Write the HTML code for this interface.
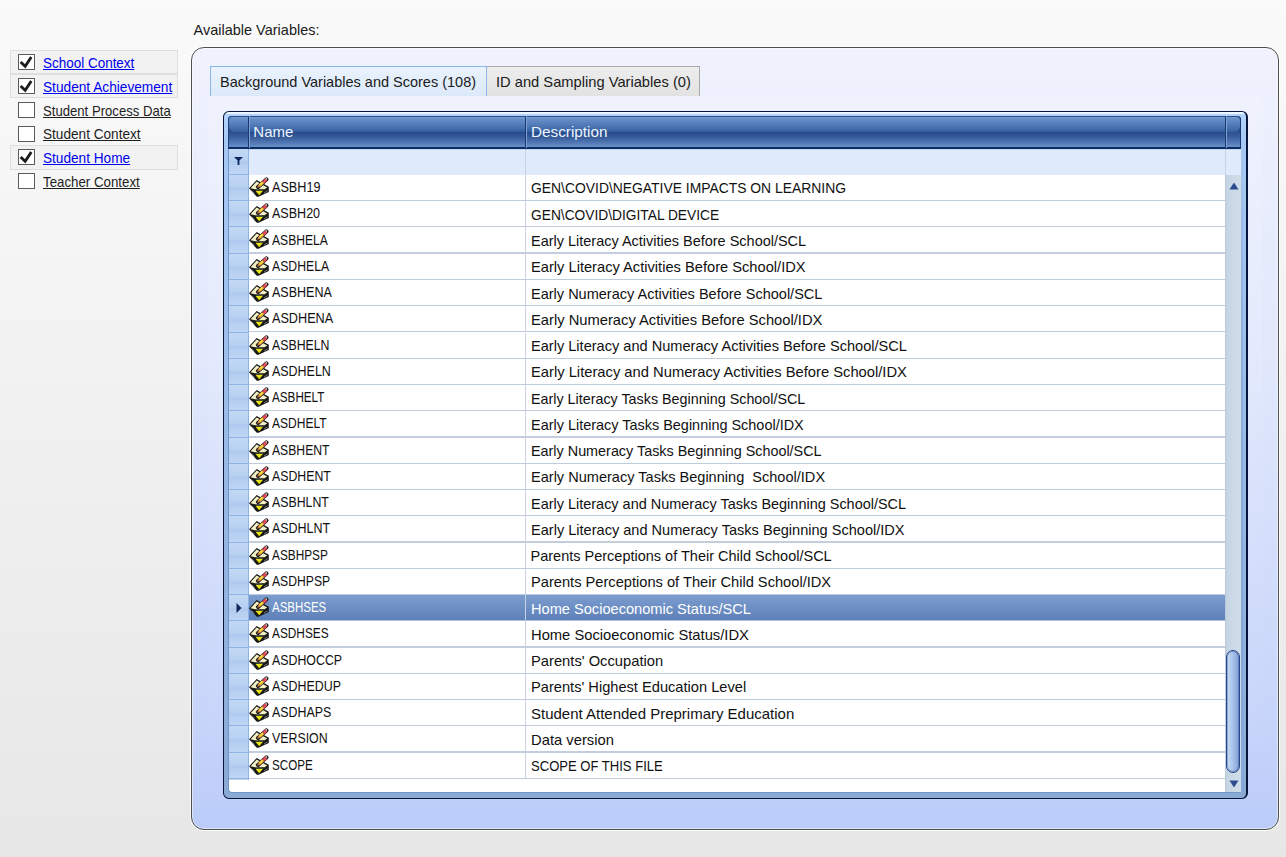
<!DOCTYPE html>
<html><head><meta charset="utf-8"><style>
*{margin:0;padding:0;box-sizing:border-box}
html,body{width:1286px;height:857px;overflow:hidden}
body{position:relative;font-family:"Liberation Sans",sans-serif;background:linear-gradient(#fafafa 0px,#e7e7e7 857px);}
.a{position:absolute;white-space:pre}
.t{position:absolute;white-space:pre;line-height:20px}
.cb{position:absolute;left:18px;width:17px;height:16px;border:1px solid #5a5a5a;background:#fff}
.grp{position:absolute;left:10px;width:168px;background:#f2f2f2;border:1px solid #dedede}
.lbl{position:absolute;left:42.7px;font-size:14.5px;line-height:20px;text-decoration:underline;white-space:pre}
.lbl.on{color:#0000ee}
.lbl.off{color:#1e1e1e}
.panel{position:absolute;left:191px;top:47px;width:1088px;height:783px;border:1px solid #4e4e4e;border-radius:13px;background:linear-gradient(#f0f2fd 0%,#e1e8fc 40%,#c8d5fa 85%,#bbccf9 100%);box-shadow:inset 0 0 0 1px rgba(255,255,255,.5),0 0 0 1px rgba(255,255,255,.8)}
.tab{position:absolute;top:66px;height:30px;font-size:14.5px;color:#1a1a1a}
.grid{position:absolute;left:223px;top:111px;width:1025px;height:688px;border:1px solid #06153a;border-right-width:2px;border-radius:6px;background:linear-gradient(#f4faff 0px,#e8f4ff 1.5px,#b2d4fc 2.5px,#a6c8f2 30px,#9cbce8 300px,#8aaad4 100%);}
.hdr{position:absolute;left:228px;top:116px;width:1013px;height:33px;border-radius:4px 4px 0 0;box-shadow:inset -1px 0 0 #173a74,inset 1px 0 0 #1e4280;background:linear-gradient(#6a8cc0 0px,#88a8d8 1px,#6b93cc 2px,#4670ae 12px,#35609f 15.5px,#264a8a 16px,#3a5f9c 22px,#5c84c0 29px,#6b91c9 31px,#0c2c64 31px,#0c2c64 33px)}
.hsep{position:absolute;top:116px;height:32px;width:2px;background:linear-gradient(90deg,#173a74 0 1px,#7f9fd0 1px 2px)}
.htx{position:absolute;top:121.5px;font-size:15px;line-height:20px;color:#eef4ff;white-space:pre}
.frow{position:absolute;left:228px;top:149px;width:1013px;height:25.5px;background:#dfeafa;border-top:1px solid #c4d6f0}
.ind{position:absolute;left:228px;width:21px;border-left:1px solid #6f96d0;border-right:1px solid #8fb3e6;background:linear-gradient(#c2d8f4 0%,#b9d2f2 40%,#adc9ef 52%,#b6cff1 62%,#c0d6f4 100%)}
.row{position:absolute;left:249px;width:976px;background:#fff;border-bottom:1px solid #bfcbdc}
.row.sel{background:linear-gradient(#7b9dcf,#5e80b8);border-bottom-color:#aebfdc}
.cell{position:absolute;font-size:14.5px;line-height:20px;white-space:pre;color:#111}
.sel .cell{color:#fff}
.vsep{position:absolute;left:276px;top:0;bottom:0;width:1px;background:#c8d2e2}
.ic{position:absolute;left:-1px;top:0px}
</style></head><body>

<div class="t" style="left:193.5px;top:19.6px;font-size:14.5px;color:#1a1a1a">Available Variables:</div>
<div class="grp" style="top:50.00px;height:24.35px"></div>
<div class="grp" style="top:73.85px;height:24.35px"></div>
<div class="grp" style="top:145.40px;height:24.35px"></div>
<div class="cb" style="top:54.00px"><svg width="15" height="15" viewBox="0 0 15 15" style="position:absolute;left:0;top:0"><path d="M1.6 6.9 L6.2 11.3 L12.3 1.9" fill="none" stroke="#1c1c1c" stroke-width="2.8" stroke-linecap="butt" stroke-linejoin="miter"/></svg></div>
<div class="lbl on" style="top:53.08px;transform:scaleX(0.9288);transform-origin:0 0;">School Context</div>
<div class="cb" style="top:77.85px"><svg width="15" height="15" viewBox="0 0 15 15" style="position:absolute;left:0;top:0"><path d="M1.6 6.9 L6.2 11.3 L12.3 1.9" fill="none" stroke="#1c1c1c" stroke-width="2.8" stroke-linecap="butt" stroke-linejoin="miter"/></svg></div>
<div class="lbl on" style="top:76.88px;transform:scaleX(0.9432);transform-origin:0 0;">Student Achievement</div>
<div class="cb" style="top:101.70px"></div>
<div class="lbl off" style="top:100.68px;transform:scaleX(0.9052);transform-origin:0 0;">Student Process Data</div>
<div class="cb" style="top:125.55px"></div>
<div class="lbl off" style="top:124.48px;transform:scaleX(0.9386);transform-origin:0 0;">Student Context</div>
<div class="cb" style="top:149.40px"><svg width="15" height="15" viewBox="0 0 15 15" style="position:absolute;left:0;top:0"><path d="M1.6 6.9 L6.2 11.3 L12.3 1.9" fill="none" stroke="#1c1c1c" stroke-width="2.8" stroke-linecap="butt" stroke-linejoin="miter"/></svg></div>
<div class="lbl on" style="top:148.28px;transform:scaleX(0.9394);transform-origin:0 0;">Student Home</div>
<div class="cb" style="top:173.25px"></div>
<div class="lbl off" style="top:172.08px;transform:scaleX(0.9164);transform-origin:0 0;">Teacher Context</div>
<div class="panel"></div>
<div style="position:absolute;left:207px;top:96px;width:1055px;height:717px;background:linear-gradient(rgba(255,255,255,0.14),rgba(255,255,255,0.05) 50%,rgba(255,255,255,0.0))"></div>
<div class="tab" style="left:210px;width:277px;border:1px solid #8db6ea;border-bottom:none;background:linear-gradient(#eaf3fd,#dce9f9)"><div class="t" style="left:9px;top:5.4px">Background Variables and Scores (108)</div></div>
<div class="tab" style="left:487px;width:213px;border:1px solid #a9a9a9;border-left:none;border-bottom:none;background:linear-gradient(#ededed,#e2e2e2)"><div class="t" style="left:8.5px;top:5.4px;transform:scaleX(1.013);transform-origin:0 0">ID and Sampling Variables (0)</div></div>
<div class="grid"></div>
<div style="position:absolute;left:228px;top:140px;width:1013px;height:652.5px;background:#fff;border-left:1px solid #6f96cc;border-bottom:1px solid #6f96cc;border-bottom-left-radius:4px;border-bottom-right-radius:2px"></div>
<div class="hdr"></div>
<div style="position:absolute;left:229px;top:117px;width:19px;height:30px;background:linear-gradient(#2a4c8b 0px,#2a4c8b 14px,#3a5f9c 20px,#5c84c0 28px,#6b91c9 30px)"></div>
<div style="position:absolute;left:229px;top:117px;width:19px;height:15px;border-bottom-left-radius:6px;background:linear-gradient(#7a9ed2 0px,#6b93cc 1px,#4670ae 11px,#36609f 15px)"></div>
<div style="position:absolute;left:1226px;top:117px;width:14px;height:30px;background:linear-gradient(#2a4c8b 0px,#2a4c8b 14px,#3a5f9c 20px,#5c84c0 28px,#6b91c9 30px)"></div>
<div style="position:absolute;left:1226px;top:117px;width:14px;height:15px;border-bottom-right-radius:6px;border-top-right-radius:3px;background:linear-gradient(#7a9ed2 0px,#6b93cc 1px,#4670ae 11px,#36609f 15px)"></div>
<div style="position:absolute;left:228px;top:116px;width:1013px;height:10px;border-top:1px solid #294c88;border-left:1px solid #1e4280;border-right:1px solid #173a74;border-radius:4px 4px 0 0"></div>
<div class="hsep" style="left:247.5px"></div>
<div class="hsep" style="left:524.5px"></div>
<div class="hsep" style="left:1224.5px"></div>
<div class="htx" style="left:253.3px">Name</div>
<div class="htx" style="left:530.5px;transform:scaleX(1.02);transform-origin:0 0">Description</div>
<div class="frow"></div>
<div class="ind" style="top:149px;height:26px;border-bottom:1px solid #8fb3e6"><svg width="12" height="12" viewBox="0 0 12 12" style="position:absolute;left:4px;top:6px"><path d="M1 2 L10 2 L6.4 5.6 L6.4 10 L4.6 10 L4.6 5.6 Z" fill="#0b2562"/></svg></div>
<div style="position:absolute;left:525px;top:149px;width:1px;height:25.5px;background:#c8d2e2"></div>
<div style="position:absolute;left:1225px;top:149px;width:1px;height:25.5px;background:#c8d2e2"></div>
<div class="ind" style="top:174.94px;height:27.26px"></div>
<div class="row" style="top:174.94px;height:26.26px;"><svg class="ic" width="24" height="24" viewBox="0 0 24 24"><path d="M1 13.3 L8.6 5.1 L20.8 11.8 L20.8 17 L10.5 21.8 L8.8 21.8 Z" fill="#171717"/><path d="M2.5 13.3 L8.6 6.5 L19.3 12.4 L16.8 14 L8.4 14.5 Z" fill="#f4f0c4"/><path d="M7.6 14.5 L17.3 13.9 L16.7 15.3 L8.4 15.8 Z" fill="#4a4a4a"/><path d="M7.6 16 L15 15.7 L11.2 20.3 Z" fill="#e8e410"/><path d="M3.6 15.6 L6.6 18.4" stroke="#8a8a8a" stroke-width="0.8"/><path d="M16 18.2 L19.4 15.8" stroke="#9a9a9a" stroke-width="0.8"/><g transform="translate(9.4,12.5) rotate(-42)"><rect x="-1.2" y="-2.05" width="15.3" height="4.1" rx="1.7" fill="#1c1c1c"/><path d="M-0.5 0 L2.6 -1.4 L2.6 1.4 Z" fill="#e0804e"/><rect x="2.4" y="-1.5" width="5.8" height="3" rx="1" fill="#ee9c48"/><rect x="2.9" y="-1.1" width="4.6" height="1.7" rx="0.85" fill="#f4e230"/><rect x="8.2" y="-1.5" width="3.6" height="3" fill="#e84a5a"/><rect x="11.6" y="-1.2" width="1.4" height="1.6" fill="#eed8d8"/></g></svg><div class="cell" style="left:22.5px;top:2.06px;transform:scaleX(0.8713);transform-origin:0 0;">ASBH19</div><div class="vsep"></div><div class="cell" style="left:281.5px;top:3.56px;transform:scaleX(0.9574);transform-origin:0 0;">GEN\COVID\NEGATIVE IMPACTS ON LEARNING</div></div>
<div class="ind" style="top:201.20px;height:27.26px"></div>
<div class="row" style="top:201.20px;height:26.26px;"><svg class="ic" width="24" height="24" viewBox="0 0 24 24"><path d="M1 13.3 L8.6 5.1 L20.8 11.8 L20.8 17 L10.5 21.8 L8.8 21.8 Z" fill="#171717"/><path d="M2.5 13.3 L8.6 6.5 L19.3 12.4 L16.8 14 L8.4 14.5 Z" fill="#f4f0c4"/><path d="M7.6 14.5 L17.3 13.9 L16.7 15.3 L8.4 15.8 Z" fill="#4a4a4a"/><path d="M7.6 16 L15 15.7 L11.2 20.3 Z" fill="#e8e410"/><path d="M3.6 15.6 L6.6 18.4" stroke="#8a8a8a" stroke-width="0.8"/><path d="M16 18.2 L19.4 15.8" stroke="#9a9a9a" stroke-width="0.8"/><g transform="translate(9.4,12.5) rotate(-42)"><rect x="-1.2" y="-2.05" width="15.3" height="4.1" rx="1.7" fill="#1c1c1c"/><path d="M-0.5 0 L2.6 -1.4 L2.6 1.4 Z" fill="#e0804e"/><rect x="2.4" y="-1.5" width="5.8" height="3" rx="1" fill="#ee9c48"/><rect x="2.9" y="-1.1" width="4.6" height="1.7" rx="0.85" fill="#f4e230"/><rect x="8.2" y="-1.5" width="3.6" height="3" fill="#e84a5a"/><rect x="11.6" y="-1.2" width="1.4" height="1.6" fill="#eed8d8"/></g></svg><div class="cell" style="left:22.5px;top:2.06px;transform:scaleX(0.8644);transform-origin:0 0;">ASBH20</div><div class="vsep"></div><div class="cell" style="left:281.5px;top:3.56px;transform:scaleX(0.9493);transform-origin:0 0;">GEN\COVID\DIGITAL DEVICE</div></div>
<div class="ind" style="top:227.46px;height:27.26px"></div>
<div class="row" style="top:227.46px;height:26.26px;border-bottom-width:2px;border-bottom-color:#c3cddc;"><svg class="ic" width="24" height="24" viewBox="0 0 24 24"><path d="M1 13.3 L8.6 5.1 L20.8 11.8 L20.8 17 L10.5 21.8 L8.8 21.8 Z" fill="#171717"/><path d="M2.5 13.3 L8.6 6.5 L19.3 12.4 L16.8 14 L8.4 14.5 Z" fill="#f4f0c4"/><path d="M7.6 14.5 L17.3 13.9 L16.7 15.3 L8.4 15.8 Z" fill="#4a4a4a"/><path d="M7.6 16 L15 15.7 L11.2 20.3 Z" fill="#e8e410"/><path d="M3.6 15.6 L6.6 18.4" stroke="#8a8a8a" stroke-width="0.8"/><path d="M16 18.2 L19.4 15.8" stroke="#9a9a9a" stroke-width="0.8"/><g transform="translate(9.4,12.5) rotate(-42)"><rect x="-1.2" y="-2.05" width="15.3" height="4.1" rx="1.7" fill="#1c1c1c"/><path d="M-0.5 0 L2.6 -1.4 L2.6 1.4 Z" fill="#e0804e"/><rect x="2.4" y="-1.5" width="5.8" height="3" rx="1" fill="#ee9c48"/><rect x="2.9" y="-1.1" width="4.6" height="1.7" rx="0.85" fill="#f4e230"/><rect x="8.2" y="-1.5" width="3.6" height="3" fill="#e84a5a"/><rect x="11.6" y="-1.2" width="1.4" height="1.6" fill="#eed8d8"/></g></svg><div class="cell" style="left:22.5px;top:2.06px;transform:scaleX(0.8345);transform-origin:0 0;">ASBHELA</div><div class="vsep"></div><div class="cell" style="left:281.5px;top:3.56px;transform:scaleX(0.9982);transform-origin:0 0;">Early Literacy Activities Before School/SCL</div></div>
<div class="ind" style="top:253.72px;height:27.26px"></div>
<div class="row" style="top:253.72px;height:26.26px;"><svg class="ic" width="24" height="24" viewBox="0 0 24 24"><path d="M1 13.3 L8.6 5.1 L20.8 11.8 L20.8 17 L10.5 21.8 L8.8 21.8 Z" fill="#171717"/><path d="M2.5 13.3 L8.6 6.5 L19.3 12.4 L16.8 14 L8.4 14.5 Z" fill="#f4f0c4"/><path d="M7.6 14.5 L17.3 13.9 L16.7 15.3 L8.4 15.8 Z" fill="#4a4a4a"/><path d="M7.6 16 L15 15.7 L11.2 20.3 Z" fill="#e8e410"/><path d="M3.6 15.6 L6.6 18.4" stroke="#8a8a8a" stroke-width="0.8"/><path d="M16 18.2 L19.4 15.8" stroke="#9a9a9a" stroke-width="0.8"/><g transform="translate(9.4,12.5) rotate(-42)"><rect x="-1.2" y="-2.05" width="15.3" height="4.1" rx="1.7" fill="#1c1c1c"/><path d="M-0.5 0 L2.6 -1.4 L2.6 1.4 Z" fill="#e0804e"/><rect x="2.4" y="-1.5" width="5.8" height="3" rx="1" fill="#ee9c48"/><rect x="2.9" y="-1.1" width="4.6" height="1.7" rx="0.85" fill="#f4e230"/><rect x="8.2" y="-1.5" width="3.6" height="3" fill="#e84a5a"/><rect x="11.6" y="-1.2" width="1.4" height="1.6" fill="#eed8d8"/></g></svg><div class="cell" style="left:22.5px;top:2.06px;transform:scaleX(0.8442);transform-origin:0 0;">ASDHELA</div><div class="vsep"></div><div class="cell" style="left:281.5px;top:3.56px;transform:scaleX(1.0111);transform-origin:0 0;">Early Literacy Activities Before School/IDX</div></div>
<div class="ind" style="top:279.98px;height:27.26px"></div>
<div class="row" style="top:279.98px;height:26.26px;"><svg class="ic" width="24" height="24" viewBox="0 0 24 24"><path d="M1 13.3 L8.6 5.1 L20.8 11.8 L20.8 17 L10.5 21.8 L8.8 21.8 Z" fill="#171717"/><path d="M2.5 13.3 L8.6 6.5 L19.3 12.4 L16.8 14 L8.4 14.5 Z" fill="#f4f0c4"/><path d="M7.6 14.5 L17.3 13.9 L16.7 15.3 L8.4 15.8 Z" fill="#4a4a4a"/><path d="M7.6 16 L15 15.7 L11.2 20.3 Z" fill="#e8e410"/><path d="M3.6 15.6 L6.6 18.4" stroke="#8a8a8a" stroke-width="0.8"/><path d="M16 18.2 L19.4 15.8" stroke="#9a9a9a" stroke-width="0.8"/><g transform="translate(9.4,12.5) rotate(-42)"><rect x="-1.2" y="-2.05" width="15.3" height="4.1" rx="1.7" fill="#1c1c1c"/><path d="M-0.5 0 L2.6 -1.4 L2.6 1.4 Z" fill="#e0804e"/><rect x="2.4" y="-1.5" width="5.8" height="3" rx="1" fill="#ee9c48"/><rect x="2.9" y="-1.1" width="4.6" height="1.7" rx="0.85" fill="#f4e230"/><rect x="8.2" y="-1.5" width="3.6" height="3" fill="#e84a5a"/><rect x="11.6" y="-1.2" width="1.4" height="1.6" fill="#eed8d8"/></g></svg><div class="cell" style="left:22.5px;top:2.06px;transform:scaleX(0.8629);transform-origin:0 0;">ASBHENA</div><div class="vsep"></div><div class="cell" style="left:281.5px;top:3.56px;transform:scaleX(1.0017);transform-origin:0 0;">Early Numeracy Activities Before School/SCL</div></div>
<div class="ind" style="top:306.24px;height:27.26px"></div>
<div class="row" style="top:306.24px;height:26.26px;"><svg class="ic" width="24" height="24" viewBox="0 0 24 24"><path d="M1 13.3 L8.6 5.1 L20.8 11.8 L20.8 17 L10.5 21.8 L8.8 21.8 Z" fill="#171717"/><path d="M2.5 13.3 L8.6 6.5 L19.3 12.4 L16.8 14 L8.4 14.5 Z" fill="#f4f0c4"/><path d="M7.6 14.5 L17.3 13.9 L16.7 15.3 L8.4 15.8 Z" fill="#4a4a4a"/><path d="M7.6 16 L15 15.7 L11.2 20.3 Z" fill="#e8e410"/><path d="M3.6 15.6 L6.6 18.4" stroke="#8a8a8a" stroke-width="0.8"/><path d="M16 18.2 L19.4 15.8" stroke="#9a9a9a" stroke-width="0.8"/><g transform="translate(9.4,12.5) rotate(-42)"><rect x="-1.2" y="-2.05" width="15.3" height="4.1" rx="1.7" fill="#1c1c1c"/><path d="M-0.5 0 L2.6 -1.4 L2.6 1.4 Z" fill="#e0804e"/><rect x="2.4" y="-1.5" width="5.8" height="3" rx="1" fill="#ee9c48"/><rect x="2.9" y="-1.1" width="4.6" height="1.7" rx="0.85" fill="#f4e230"/><rect x="8.2" y="-1.5" width="3.6" height="3" fill="#e84a5a"/><rect x="11.6" y="-1.2" width="1.4" height="1.6" fill="#eed8d8"/></g></svg><div class="cell" style="left:22.5px;top:2.06px;transform:scaleX(0.8721);transform-origin:0 0;">ASDHENA</div><div class="vsep"></div><div class="cell" style="left:281.5px;top:3.56px;transform:scaleX(1.0157);transform-origin:0 0;">Early Numeracy Activities Before School/IDX</div></div>
<div class="ind" style="top:332.50px;height:27.26px"></div>
<div class="row" style="top:332.50px;height:26.26px;"><svg class="ic" width="24" height="24" viewBox="0 0 24 24"><path d="M1 13.3 L8.6 5.1 L20.8 11.8 L20.8 17 L10.5 21.8 L8.8 21.8 Z" fill="#171717"/><path d="M2.5 13.3 L8.6 6.5 L19.3 12.4 L16.8 14 L8.4 14.5 Z" fill="#f4f0c4"/><path d="M7.6 14.5 L17.3 13.9 L16.7 15.3 L8.4 15.8 Z" fill="#4a4a4a"/><path d="M7.6 16 L15 15.7 L11.2 20.3 Z" fill="#e8e410"/><path d="M3.6 15.6 L6.6 18.4" stroke="#8a8a8a" stroke-width="0.8"/><path d="M16 18.2 L19.4 15.8" stroke="#9a9a9a" stroke-width="0.8"/><g transform="translate(9.4,12.5) rotate(-42)"><rect x="-1.2" y="-2.05" width="15.3" height="4.1" rx="1.7" fill="#1c1c1c"/><path d="M-0.5 0 L2.6 -1.4 L2.6 1.4 Z" fill="#e0804e"/><rect x="2.4" y="-1.5" width="5.8" height="3" rx="1" fill="#ee9c48"/><rect x="2.9" y="-1.1" width="4.6" height="1.7" rx="0.85" fill="#f4e230"/><rect x="8.2" y="-1.5" width="3.6" height="3" fill="#e84a5a"/><rect x="11.6" y="-1.2" width="1.4" height="1.6" fill="#eed8d8"/></g></svg><div class="cell" style="left:22.5px;top:2.06px;transform:scaleX(0.8493);transform-origin:0 0;">ASBHELN</div><div class="vsep"></div><div class="cell" style="left:281.5px;top:3.56px;transform:scaleX(1.0054);transform-origin:0 0;">Early Literacy and Numeracy Activities Before School/SCL</div></div>
<div class="ind" style="top:358.76px;height:27.26px"></div>
<div class="row" style="top:358.76px;height:26.26px;"><svg class="ic" width="24" height="24" viewBox="0 0 24 24"><path d="M1 13.3 L8.6 5.1 L20.8 11.8 L20.8 17 L10.5 21.8 L8.8 21.8 Z" fill="#171717"/><path d="M2.5 13.3 L8.6 6.5 L19.3 12.4 L16.8 14 L8.4 14.5 Z" fill="#f4f0c4"/><path d="M7.6 14.5 L17.3 13.9 L16.7 15.3 L8.4 15.8 Z" fill="#4a4a4a"/><path d="M7.6 16 L15 15.7 L11.2 20.3 Z" fill="#e8e410"/><path d="M3.6 15.6 L6.6 18.4" stroke="#8a8a8a" stroke-width="0.8"/><path d="M16 18.2 L19.4 15.8" stroke="#9a9a9a" stroke-width="0.8"/><g transform="translate(9.4,12.5) rotate(-42)"><rect x="-1.2" y="-2.05" width="15.3" height="4.1" rx="1.7" fill="#1c1c1c"/><path d="M-0.5 0 L2.6 -1.4 L2.6 1.4 Z" fill="#e0804e"/><rect x="2.4" y="-1.5" width="5.8" height="3" rx="1" fill="#ee9c48"/><rect x="2.9" y="-1.1" width="4.6" height="1.7" rx="0.85" fill="#f4e230"/><rect x="8.2" y="-1.5" width="3.6" height="3" fill="#e84a5a"/><rect x="11.6" y="-1.2" width="1.4" height="1.6" fill="#eed8d8"/></g></svg><div class="cell" style="left:22.5px;top:2.06px;transform:scaleX(0.8589);transform-origin:0 0;">ASDHELN</div><div class="vsep"></div><div class="cell" style="left:281.5px;top:3.56px;transform:scaleX(1.0163);transform-origin:0 0;">Early Literacy and Numeracy Activities Before School/IDX</div></div>
<div class="ind" style="top:385.02px;height:27.26px"></div>
<div class="row" style="top:385.02px;height:26.26px;"><svg class="ic" width="24" height="24" viewBox="0 0 24 24"><path d="M1 13.3 L8.6 5.1 L20.8 11.8 L20.8 17 L10.5 21.8 L8.8 21.8 Z" fill="#171717"/><path d="M2.5 13.3 L8.6 6.5 L19.3 12.4 L16.8 14 L8.4 14.5 Z" fill="#f4f0c4"/><path d="M7.6 14.5 L17.3 13.9 L16.7 15.3 L8.4 15.8 Z" fill="#4a4a4a"/><path d="M7.6 16 L15 15.7 L11.2 20.3 Z" fill="#e8e410"/><path d="M3.6 15.6 L6.6 18.4" stroke="#8a8a8a" stroke-width="0.8"/><path d="M16 18.2 L19.4 15.8" stroke="#9a9a9a" stroke-width="0.8"/><g transform="translate(9.4,12.5) rotate(-42)"><rect x="-1.2" y="-2.05" width="15.3" height="4.1" rx="1.7" fill="#1c1c1c"/><path d="M-0.5 0 L2.6 -1.4 L2.6 1.4 Z" fill="#e0804e"/><rect x="2.4" y="-1.5" width="5.8" height="3" rx="1" fill="#ee9c48"/><rect x="2.9" y="-1.1" width="4.6" height="1.7" rx="0.85" fill="#f4e230"/><rect x="8.2" y="-1.5" width="3.6" height="3" fill="#e84a5a"/><rect x="11.6" y="-1.2" width="1.4" height="1.6" fill="#eed8d8"/></g></svg><div class="cell" style="left:22.5px;top:2.06px;transform:scaleX(0.8059);transform-origin:0 0;">ASBHELT</div><div class="vsep"></div><div class="cell" style="left:281.5px;top:3.56px;transform:scaleX(0.9874);transform-origin:0 0;">Early Literacy Tasks Beginning School/SCL</div></div>
<div class="ind" style="top:411.28px;height:27.26px"></div>
<div class="row" style="top:411.28px;height:26.26px;border-bottom-width:2px;border-bottom-color:#c3cddc;"><svg class="ic" width="24" height="24" viewBox="0 0 24 24"><path d="M1 13.3 L8.6 5.1 L20.8 11.8 L20.8 17 L10.5 21.8 L8.8 21.8 Z" fill="#171717"/><path d="M2.5 13.3 L8.6 6.5 L19.3 12.4 L16.8 14 L8.4 14.5 Z" fill="#f4f0c4"/><path d="M7.6 14.5 L17.3 13.9 L16.7 15.3 L8.4 15.8 Z" fill="#4a4a4a"/><path d="M7.6 16 L15 15.7 L11.2 20.3 Z" fill="#e8e410"/><path d="M3.6 15.6 L6.6 18.4" stroke="#8a8a8a" stroke-width="0.8"/><path d="M16 18.2 L19.4 15.8" stroke="#9a9a9a" stroke-width="0.8"/><g transform="translate(9.4,12.5) rotate(-42)"><rect x="-1.2" y="-2.05" width="15.3" height="4.1" rx="1.7" fill="#1c1c1c"/><path d="M-0.5 0 L2.6 -1.4 L2.6 1.4 Z" fill="#e0804e"/><rect x="2.4" y="-1.5" width="5.8" height="3" rx="1" fill="#ee9c48"/><rect x="2.9" y="-1.1" width="4.6" height="1.7" rx="0.85" fill="#f4e230"/><rect x="8.2" y="-1.5" width="3.6" height="3" fill="#e84a5a"/><rect x="11.6" y="-1.2" width="1.4" height="1.6" fill="#eed8d8"/></g></svg><div class="cell" style="left:22.5px;top:2.06px;transform:scaleX(0.8315);transform-origin:0 0;">ASDHELT</div><div class="vsep"></div><div class="cell" style="left:281.5px;top:3.56px;transform:scaleX(0.9963);transform-origin:0 0;">Early Literacy Tasks Beginning School/IDX</div></div>
<div class="ind" style="top:437.54px;height:27.26px"></div>
<div class="row" style="top:437.54px;height:26.26px;"><svg class="ic" width="24" height="24" viewBox="0 0 24 24"><path d="M1 13.3 L8.6 5.1 L20.8 11.8 L20.8 17 L10.5 21.8 L8.8 21.8 Z" fill="#171717"/><path d="M2.5 13.3 L8.6 6.5 L19.3 12.4 L16.8 14 L8.4 14.5 Z" fill="#f4f0c4"/><path d="M7.6 14.5 L17.3 13.9 L16.7 15.3 L8.4 15.8 Z" fill="#4a4a4a"/><path d="M7.6 16 L15 15.7 L11.2 20.3 Z" fill="#e8e410"/><path d="M3.6 15.6 L6.6 18.4" stroke="#8a8a8a" stroke-width="0.8"/><path d="M16 18.2 L19.4 15.8" stroke="#9a9a9a" stroke-width="0.8"/><g transform="translate(9.4,12.5) rotate(-42)"><rect x="-1.2" y="-2.05" width="15.3" height="4.1" rx="1.7" fill="#1c1c1c"/><path d="M-0.5 0 L2.6 -1.4 L2.6 1.4 Z" fill="#e0804e"/><rect x="2.4" y="-1.5" width="5.8" height="3" rx="1" fill="#ee9c48"/><rect x="2.9" y="-1.1" width="4.6" height="1.7" rx="0.85" fill="#f4e230"/><rect x="8.2" y="-1.5" width="3.6" height="3" fill="#e84a5a"/><rect x="11.6" y="-1.2" width="1.4" height="1.6" fill="#eed8d8"/></g></svg><div class="cell" style="left:22.5px;top:2.06px;transform:scaleX(0.8390);transform-origin:0 0;">ASBHENT</div><div class="vsep"></div><div class="cell" style="left:281.5px;top:3.56px;transform:scaleX(0.9914);transform-origin:0 0;">Early Numeracy Tasks Beginning School/SCL</div></div>
<div class="ind" style="top:463.80px;height:27.26px"></div>
<div class="row" style="top:463.80px;height:26.26px;"><svg class="ic" width="24" height="24" viewBox="0 0 24 24"><path d="M1 13.3 L8.6 5.1 L20.8 11.8 L20.8 17 L10.5 21.8 L8.8 21.8 Z" fill="#171717"/><path d="M2.5 13.3 L8.6 6.5 L19.3 12.4 L16.8 14 L8.4 14.5 Z" fill="#f4f0c4"/><path d="M7.6 14.5 L17.3 13.9 L16.7 15.3 L8.4 15.8 Z" fill="#4a4a4a"/><path d="M7.6 16 L15 15.7 L11.2 20.3 Z" fill="#e8e410"/><path d="M3.6 15.6 L6.6 18.4" stroke="#8a8a8a" stroke-width="0.8"/><path d="M16 18.2 L19.4 15.8" stroke="#9a9a9a" stroke-width="0.8"/><g transform="translate(9.4,12.5) rotate(-42)"><rect x="-1.2" y="-2.05" width="15.3" height="4.1" rx="1.7" fill="#1c1c1c"/><path d="M-0.5 0 L2.6 -1.4 L2.6 1.4 Z" fill="#e0804e"/><rect x="2.4" y="-1.5" width="5.8" height="3" rx="1" fill="#ee9c48"/><rect x="2.9" y="-1.1" width="4.6" height="1.7" rx="0.85" fill="#f4e230"/><rect x="8.2" y="-1.5" width="3.6" height="3" fill="#e84a5a"/><rect x="11.6" y="-1.2" width="1.4" height="1.6" fill="#eed8d8"/></g></svg><div class="cell" style="left:22.5px;top:2.06px;transform:scaleX(0.8486);transform-origin:0 0;">ASDHENT</div><div class="vsep"></div><div class="cell" style="left:281.5px;top:3.56px;transform:scaleX(1.0034);transform-origin:0 0;">Early Numeracy Tasks Beginning&nbsp; School/IDX</div></div>
<div class="ind" style="top:490.06px;height:27.26px"></div>
<div class="row" style="top:490.06px;height:26.26px;"><svg class="ic" width="24" height="24" viewBox="0 0 24 24"><path d="M1 13.3 L8.6 5.1 L20.8 11.8 L20.8 17 L10.5 21.8 L8.8 21.8 Z" fill="#171717"/><path d="M2.5 13.3 L8.6 6.5 L19.3 12.4 L16.8 14 L8.4 14.5 Z" fill="#f4f0c4"/><path d="M7.6 14.5 L17.3 13.9 L16.7 15.3 L8.4 15.8 Z" fill="#4a4a4a"/><path d="M7.6 16 L15 15.7 L11.2 20.3 Z" fill="#e8e410"/><path d="M3.6 15.6 L6.6 18.4" stroke="#8a8a8a" stroke-width="0.8"/><path d="M16 18.2 L19.4 15.8" stroke="#9a9a9a" stroke-width="0.8"/><g transform="translate(9.4,12.5) rotate(-42)"><rect x="-1.2" y="-2.05" width="15.3" height="4.1" rx="1.7" fill="#1c1c1c"/><path d="M-0.5 0 L2.6 -1.4 L2.6 1.4 Z" fill="#e0804e"/><rect x="2.4" y="-1.5" width="5.8" height="3" rx="1" fill="#ee9c48"/><rect x="2.9" y="-1.1" width="4.6" height="1.7" rx="0.85" fill="#f4e230"/><rect x="8.2" y="-1.5" width="3.6" height="3" fill="#e84a5a"/><rect x="11.6" y="-1.2" width="1.4" height="1.6" fill="#eed8d8"/></g></svg><div class="cell" style="left:22.5px;top:2.06px;transform:scaleX(0.8493);transform-origin:0 0;">ASBHLNT</div><div class="vsep"></div><div class="cell" style="left:281.5px;top:3.56px;transform:scaleX(0.9973);transform-origin:0 0;">Early Literacy and Numeracy Tasks Beginning School/SCL</div></div>
<div class="ind" style="top:516.32px;height:27.26px"></div>
<div class="row" style="top:516.32px;height:26.26px;border-bottom-width:2px;border-bottom-color:#c3cddc;"><svg class="ic" width="24" height="24" viewBox="0 0 24 24"><path d="M1 13.3 L8.6 5.1 L20.8 11.8 L20.8 17 L10.5 21.8 L8.8 21.8 Z" fill="#171717"/><path d="M2.5 13.3 L8.6 6.5 L19.3 12.4 L16.8 14 L8.4 14.5 Z" fill="#f4f0c4"/><path d="M7.6 14.5 L17.3 13.9 L16.7 15.3 L8.4 15.8 Z" fill="#4a4a4a"/><path d="M7.6 16 L15 15.7 L11.2 20.3 Z" fill="#e8e410"/><path d="M3.6 15.6 L6.6 18.4" stroke="#8a8a8a" stroke-width="0.8"/><path d="M16 18.2 L19.4 15.8" stroke="#9a9a9a" stroke-width="0.8"/><g transform="translate(9.4,12.5) rotate(-42)"><rect x="-1.2" y="-2.05" width="15.3" height="4.1" rx="1.7" fill="#1c1c1c"/><path d="M-0.5 0 L2.6 -1.4 L2.6 1.4 Z" fill="#e0804e"/><rect x="2.4" y="-1.5" width="5.8" height="3" rx="1" fill="#ee9c48"/><rect x="2.9" y="-1.1" width="4.6" height="1.7" rx="0.85" fill="#f4e230"/><rect x="8.2" y="-1.5" width="3.6" height="3" fill="#e84a5a"/><rect x="11.6" y="-1.2" width="1.4" height="1.6" fill="#eed8d8"/></g></svg><div class="cell" style="left:22.5px;top:2.06px;transform:scaleX(0.8591);transform-origin:0 0;">ASDHLNT</div><div class="vsep"></div><div class="cell" style="left:281.5px;top:3.56px;transform:scaleX(1.0040);transform-origin:0 0;">Early Literacy and Numeracy Tasks Beginning School/IDX</div></div>
<div class="ind" style="top:542.58px;height:27.26px"></div>
<div class="row" style="top:542.58px;height:26.26px;"><svg class="ic" width="24" height="24" viewBox="0 0 24 24"><path d="M1 13.3 L8.6 5.1 L20.8 11.8 L20.8 17 L10.5 21.8 L8.8 21.8 Z" fill="#171717"/><path d="M2.5 13.3 L8.6 6.5 L19.3 12.4 L16.8 14 L8.4 14.5 Z" fill="#f4f0c4"/><path d="M7.6 14.5 L17.3 13.9 L16.7 15.3 L8.4 15.8 Z" fill="#4a4a4a"/><path d="M7.6 16 L15 15.7 L11.2 20.3 Z" fill="#e8e410"/><path d="M3.6 15.6 L6.6 18.4" stroke="#8a8a8a" stroke-width="0.8"/><path d="M16 18.2 L19.4 15.8" stroke="#9a9a9a" stroke-width="0.8"/><g transform="translate(9.4,12.5) rotate(-42)"><rect x="-1.2" y="-2.05" width="15.3" height="4.1" rx="1.7" fill="#1c1c1c"/><path d="M-0.5 0 L2.6 -1.4 L2.6 1.4 Z" fill="#e0804e"/><rect x="2.4" y="-1.5" width="5.8" height="3" rx="1" fill="#ee9c48"/><rect x="2.9" y="-1.1" width="4.6" height="1.7" rx="0.85" fill="#f4e230"/><rect x="8.2" y="-1.5" width="3.6" height="3" fill="#e84a5a"/><rect x="11.6" y="-1.2" width="1.4" height="1.6" fill="#eed8d8"/></g></svg><div class="cell" style="left:22.5px;top:2.06px;transform:scaleX(0.8145);transform-origin:0 0;">ASBHPSP</div><div class="vsep"></div><div class="cell" style="left:281.5px;top:3.56px;transform:scaleX(1.0000);transform-origin:0 0;">Parents Perceptions of Their Child School/SCL</div></div>
<div class="ind" style="top:568.84px;height:27.26px"></div>
<div class="row" style="top:568.84px;height:26.26px;"><svg class="ic" width="24" height="24" viewBox="0 0 24 24"><path d="M1 13.3 L8.6 5.1 L20.8 11.8 L20.8 17 L10.5 21.8 L8.8 21.8 Z" fill="#171717"/><path d="M2.5 13.3 L8.6 6.5 L19.3 12.4 L16.8 14 L8.4 14.5 Z" fill="#f4f0c4"/><path d="M7.6 14.5 L17.3 13.9 L16.7 15.3 L8.4 15.8 Z" fill="#4a4a4a"/><path d="M7.6 16 L15 15.7 L11.2 20.3 Z" fill="#e8e410"/><path d="M3.6 15.6 L6.6 18.4" stroke="#8a8a8a" stroke-width="0.8"/><path d="M16 18.2 L19.4 15.8" stroke="#9a9a9a" stroke-width="0.8"/><g transform="translate(9.4,12.5) rotate(-42)"><rect x="-1.2" y="-2.05" width="15.3" height="4.1" rx="1.7" fill="#1c1c1c"/><path d="M-0.5 0 L2.6 -1.4 L2.6 1.4 Z" fill="#e0804e"/><rect x="2.4" y="-1.5" width="5.8" height="3" rx="1" fill="#ee9c48"/><rect x="2.9" y="-1.1" width="4.6" height="1.7" rx="0.85" fill="#f4e230"/><rect x="8.2" y="-1.5" width="3.6" height="3" fill="#e84a5a"/><rect x="11.6" y="-1.2" width="1.4" height="1.6" fill="#eed8d8"/></g></svg><div class="cell" style="left:22.5px;top:2.06px;transform:scaleX(0.8389);transform-origin:0 0;">ASDHPSP</div><div class="vsep"></div><div class="cell" style="left:281.5px;top:3.56px;transform:scaleX(1.0101);transform-origin:0 0;">Parents Perceptions of Their Child School/IDX</div></div>
<div class="ind" style="top:595.10px;height:27.26px"><svg width="8" height="12" viewBox="0 0 8 12" style="position:absolute;left:6px;top:7.2px"><path d="M1.5 1 L6.5 6 L1.5 11 Z" fill="#10285a"/></svg></div>
<div class="row sel" style="top:595.10px;height:26.26px;"><svg class="ic" width="24" height="24" viewBox="0 0 24 24"><path d="M1 13.3 L8.6 5.1 L20.8 11.8 L20.8 17 L10.5 21.8 L8.8 21.8 Z" fill="#171717"/><path d="M2.5 13.3 L8.6 6.5 L19.3 12.4 L16.8 14 L8.4 14.5 Z" fill="#f4f0c4"/><path d="M7.6 14.5 L17.3 13.9 L16.7 15.3 L8.4 15.8 Z" fill="#4a4a4a"/><path d="M7.6 16 L15 15.7 L11.2 20.3 Z" fill="#e8e410"/><path d="M3.6 15.6 L6.6 18.4" stroke="#8a8a8a" stroke-width="0.8"/><path d="M16 18.2 L19.4 15.8" stroke="#9a9a9a" stroke-width="0.8"/><g transform="translate(9.4,12.5) rotate(-42)"><rect x="-1.2" y="-2.05" width="15.3" height="4.1" rx="1.7" fill="#1c1c1c"/><path d="M-0.5 0 L2.6 -1.4 L2.6 1.4 Z" fill="#e0804e"/><rect x="2.4" y="-1.5" width="5.8" height="3" rx="1" fill="#ee9c48"/><rect x="2.9" y="-1.1" width="4.6" height="1.7" rx="0.85" fill="#f4e230"/><rect x="8.2" y="-1.5" width="3.6" height="3" fill="#e84a5a"/><rect x="11.6" y="-1.2" width="1.4" height="1.6" fill="#eed8d8"/></g></svg><div class="cell" style="left:22.5px;top:2.06px;transform:scaleX(0.7924);transform-origin:0 0;">ASBHSES</div><div class="vsep"></div><div class="cell" style="left:281.5px;top:3.56px;transform:scaleX(1.0069);transform-origin:0 0;">Home Socioeconomic Status/SCL</div></div>
<div class="ind" style="top:621.36px;height:27.26px"></div>
<div class="row" style="top:621.36px;height:26.26px;border-bottom-width:2px;border-bottom-color:#c3cddc;"><svg class="ic" width="24" height="24" viewBox="0 0 24 24"><path d="M1 13.3 L8.6 5.1 L20.8 11.8 L20.8 17 L10.5 21.8 L8.8 21.8 Z" fill="#171717"/><path d="M2.5 13.3 L8.6 6.5 L19.3 12.4 L16.8 14 L8.4 14.5 Z" fill="#f4f0c4"/><path d="M7.6 14.5 L17.3 13.9 L16.7 15.3 L8.4 15.8 Z" fill="#4a4a4a"/><path d="M7.6 16 L15 15.7 L11.2 20.3 Z" fill="#e8e410"/><path d="M3.6 15.6 L6.6 18.4" stroke="#8a8a8a" stroke-width="0.8"/><path d="M16 18.2 L19.4 15.8" stroke="#9a9a9a" stroke-width="0.8"/><g transform="translate(9.4,12.5) rotate(-42)"><rect x="-1.2" y="-2.05" width="15.3" height="4.1" rx="1.7" fill="#1c1c1c"/><path d="M-0.5 0 L2.6 -1.4 L2.6 1.4 Z" fill="#e0804e"/><rect x="2.4" y="-1.5" width="5.8" height="3" rx="1" fill="#ee9c48"/><rect x="2.9" y="-1.1" width="4.6" height="1.7" rx="0.85" fill="#f4e230"/><rect x="8.2" y="-1.5" width="3.6" height="3" fill="#e84a5a"/><rect x="11.6" y="-1.2" width="1.4" height="1.6" fill="#eed8d8"/></g></svg><div class="cell" style="left:22.5px;top:2.06px;transform:scaleX(0.8170);transform-origin:0 0;">ASDHSES</div><div class="vsep"></div><div class="cell" style="left:281.5px;top:3.56px;transform:scaleX(1.0164);transform-origin:0 0;">Home Socioeconomic Status/IDX</div></div>
<div class="ind" style="top:647.62px;height:27.26px"></div>
<div class="row" style="top:647.62px;height:26.26px;"><svg class="ic" width="24" height="24" viewBox="0 0 24 24"><path d="M1 13.3 L8.6 5.1 L20.8 11.8 L20.8 17 L10.5 21.8 L8.8 21.8 Z" fill="#171717"/><path d="M2.5 13.3 L8.6 6.5 L19.3 12.4 L16.8 14 L8.4 14.5 Z" fill="#f4f0c4"/><path d="M7.6 14.5 L17.3 13.9 L16.7 15.3 L8.4 15.8 Z" fill="#4a4a4a"/><path d="M7.6 16 L15 15.7 L11.2 20.3 Z" fill="#e8e410"/><path d="M3.6 15.6 L6.6 18.4" stroke="#8a8a8a" stroke-width="0.8"/><path d="M16 18.2 L19.4 15.8" stroke="#9a9a9a" stroke-width="0.8"/><g transform="translate(9.4,12.5) rotate(-42)"><rect x="-1.2" y="-2.05" width="15.3" height="4.1" rx="1.7" fill="#1c1c1c"/><path d="M-0.5 0 L2.6 -1.4 L2.6 1.4 Z" fill="#e0804e"/><rect x="2.4" y="-1.5" width="5.8" height="3" rx="1" fill="#ee9c48"/><rect x="2.9" y="-1.1" width="4.6" height="1.7" rx="0.85" fill="#f4e230"/><rect x="8.2" y="-1.5" width="3.6" height="3" fill="#e84a5a"/><rect x="11.6" y="-1.2" width="1.4" height="1.6" fill="#eed8d8"/></g></svg><div class="cell" style="left:22.5px;top:2.06px;transform:scaleX(0.8525);transform-origin:0 0;">ASDHOCCP</div><div class="vsep"></div><div class="cell" style="left:281.5px;top:3.56px;transform:scaleX(1.0155);transform-origin:0 0;">Parents' Occupation</div></div>
<div class="ind" style="top:673.88px;height:27.26px"></div>
<div class="row" style="top:673.88px;height:26.26px;"><svg class="ic" width="24" height="24" viewBox="0 0 24 24"><path d="M1 13.3 L8.6 5.1 L20.8 11.8 L20.8 17 L10.5 21.8 L8.8 21.8 Z" fill="#171717"/><path d="M2.5 13.3 L8.6 6.5 L19.3 12.4 L16.8 14 L8.4 14.5 Z" fill="#f4f0c4"/><path d="M7.6 14.5 L17.3 13.9 L16.7 15.3 L8.4 15.8 Z" fill="#4a4a4a"/><path d="M7.6 16 L15 15.7 L11.2 20.3 Z" fill="#e8e410"/><path d="M3.6 15.6 L6.6 18.4" stroke="#8a8a8a" stroke-width="0.8"/><path d="M16 18.2 L19.4 15.8" stroke="#9a9a9a" stroke-width="0.8"/><g transform="translate(9.4,12.5) rotate(-42)"><rect x="-1.2" y="-2.05" width="15.3" height="4.1" rx="1.7" fill="#1c1c1c"/><path d="M-0.5 0 L2.6 -1.4 L2.6 1.4 Z" fill="#e0804e"/><rect x="2.4" y="-1.5" width="5.8" height="3" rx="1" fill="#ee9c48"/><rect x="2.9" y="-1.1" width="4.6" height="1.7" rx="0.85" fill="#f4e230"/><rect x="8.2" y="-1.5" width="3.6" height="3" fill="#e84a5a"/><rect x="11.6" y="-1.2" width="1.4" height="1.6" fill="#eed8d8"/></g></svg><div class="cell" style="left:22.5px;top:2.06px;transform:scaleX(0.8551);transform-origin:0 0;">ASDHEDUP</div><div class="vsep"></div><div class="cell" style="left:281.5px;top:3.56px;transform:scaleX(1.0095);transform-origin:0 0;">Parents' Highest Education Level</div></div>
<div class="ind" style="top:700.14px;height:27.26px"></div>
<div class="row" style="top:700.14px;height:26.26px;"><svg class="ic" width="24" height="24" viewBox="0 0 24 24"><path d="M1 13.3 L8.6 5.1 L20.8 11.8 L20.8 17 L10.5 21.8 L8.8 21.8 Z" fill="#171717"/><path d="M2.5 13.3 L8.6 6.5 L19.3 12.4 L16.8 14 L8.4 14.5 Z" fill="#f4f0c4"/><path d="M7.6 14.5 L17.3 13.9 L16.7 15.3 L8.4 15.8 Z" fill="#4a4a4a"/><path d="M7.6 16 L15 15.7 L11.2 20.3 Z" fill="#e8e410"/><path d="M3.6 15.6 L6.6 18.4" stroke="#8a8a8a" stroke-width="0.8"/><path d="M16 18.2 L19.4 15.8" stroke="#9a9a9a" stroke-width="0.8"/><g transform="translate(9.4,12.5) rotate(-42)"><rect x="-1.2" y="-2.05" width="15.3" height="4.1" rx="1.7" fill="#1c1c1c"/><path d="M-0.5 0 L2.6 -1.4 L2.6 1.4 Z" fill="#e0804e"/><rect x="2.4" y="-1.5" width="5.8" height="3" rx="1" fill="#ee9c48"/><rect x="2.9" y="-1.1" width="4.6" height="1.7" rx="0.85" fill="#f4e230"/><rect x="8.2" y="-1.5" width="3.6" height="3" fill="#e84a5a"/><rect x="11.6" y="-1.2" width="1.4" height="1.6" fill="#eed8d8"/></g></svg><div class="cell" style="left:22.5px;top:2.06px;transform:scaleX(0.8537);transform-origin:0 0;">ASDHAPS</div><div class="vsep"></div><div class="cell" style="left:281.5px;top:3.56px;transform:scaleX(1.0336);transform-origin:0 0;">Student Attended Preprimary Education</div></div>
<div class="ind" style="top:726.40px;height:27.26px"></div>
<div class="row" style="top:726.40px;height:26.26px;border-bottom-width:2px;border-bottom-color:#c3cddc;"><svg class="ic" width="24" height="24" viewBox="0 0 24 24"><path d="M1 13.3 L8.6 5.1 L20.8 11.8 L20.8 17 L10.5 21.8 L8.8 21.8 Z" fill="#171717"/><path d="M2.5 13.3 L8.6 6.5 L19.3 12.4 L16.8 14 L8.4 14.5 Z" fill="#f4f0c4"/><path d="M7.6 14.5 L17.3 13.9 L16.7 15.3 L8.4 15.8 Z" fill="#4a4a4a"/><path d="M7.6 16 L15 15.7 L11.2 20.3 Z" fill="#e8e410"/><path d="M3.6 15.6 L6.6 18.4" stroke="#8a8a8a" stroke-width="0.8"/><path d="M16 18.2 L19.4 15.8" stroke="#9a9a9a" stroke-width="0.8"/><g transform="translate(9.4,12.5) rotate(-42)"><rect x="-1.2" y="-2.05" width="15.3" height="4.1" rx="1.7" fill="#1c1c1c"/><path d="M-0.5 0 L2.6 -1.4 L2.6 1.4 Z" fill="#e0804e"/><rect x="2.4" y="-1.5" width="5.8" height="3" rx="1" fill="#ee9c48"/><rect x="2.9" y="-1.1" width="4.6" height="1.7" rx="0.85" fill="#f4e230"/><rect x="8.2" y="-1.5" width="3.6" height="3" fill="#e84a5a"/><rect x="11.6" y="-1.2" width="1.4" height="1.6" fill="#eed8d8"/></g></svg><div class="cell" style="left:22.5px;top:2.06px;transform:scaleX(0.8523);transform-origin:0 0;">VERSION</div><div class="vsep"></div><div class="cell" style="left:281.5px;top:3.56px;transform:scaleX(1.0187);transform-origin:0 0;">Data version</div></div>
<div class="ind" style="top:752.66px;height:27.26px"></div>
<div class="row" style="top:752.66px;height:26.26px;"><svg class="ic" width="24" height="24" viewBox="0 0 24 24"><path d="M1 13.3 L8.6 5.1 L20.8 11.8 L20.8 17 L10.5 21.8 L8.8 21.8 Z" fill="#171717"/><path d="M2.5 13.3 L8.6 6.5 L19.3 12.4 L16.8 14 L8.4 14.5 Z" fill="#f4f0c4"/><path d="M7.6 14.5 L17.3 13.9 L16.7 15.3 L8.4 15.8 Z" fill="#4a4a4a"/><path d="M7.6 16 L15 15.7 L11.2 20.3 Z" fill="#e8e410"/><path d="M3.6 15.6 L6.6 18.4" stroke="#8a8a8a" stroke-width="0.8"/><path d="M16 18.2 L19.4 15.8" stroke="#9a9a9a" stroke-width="0.8"/><g transform="translate(9.4,12.5) rotate(-42)"><rect x="-1.2" y="-2.05" width="15.3" height="4.1" rx="1.7" fill="#1c1c1c"/><path d="M-0.5 0 L2.6 -1.4 L2.6 1.4 Z" fill="#e0804e"/><rect x="2.4" y="-1.5" width="5.8" height="3" rx="1" fill="#ee9c48"/><rect x="2.9" y="-1.1" width="4.6" height="1.7" rx="0.85" fill="#f4e230"/><rect x="8.2" y="-1.5" width="3.6" height="3" fill="#e84a5a"/><rect x="11.6" y="-1.2" width="1.4" height="1.6" fill="#eed8d8"/></g></svg><div class="cell" style="left:22.5px;top:2.06px;transform:scaleX(0.8014);transform-origin:0 0;">SCOPE</div><div class="vsep"></div><div class="cell" style="left:281.5px;top:3.56px;transform:scaleX(0.9001);transform-origin:0 0;">SCOPE OF THIS FILE</div></div>
<div style="position:absolute;left:229px;top:200.20px;width:19px;height:1px;background:#8fb3e6"></div>
<div style="position:absolute;left:229px;top:226.46px;width:19px;height:1px;background:#8fb3e6"></div>
<div style="position:absolute;left:229px;top:252.72px;width:19px;height:1px;background:#8fb3e6"></div>
<div style="position:absolute;left:229px;top:278.98px;width:19px;height:1px;background:#8fb3e6"></div>
<div style="position:absolute;left:229px;top:305.24px;width:19px;height:1px;background:#8fb3e6"></div>
<div style="position:absolute;left:229px;top:331.50px;width:19px;height:1px;background:#8fb3e6"></div>
<div style="position:absolute;left:229px;top:357.76px;width:19px;height:1px;background:#8fb3e6"></div>
<div style="position:absolute;left:229px;top:384.02px;width:19px;height:1px;background:#8fb3e6"></div>
<div style="position:absolute;left:229px;top:410.28px;width:19px;height:1px;background:#8fb3e6"></div>
<div style="position:absolute;left:229px;top:436.54px;width:19px;height:1px;background:#8fb3e6"></div>
<div style="position:absolute;left:229px;top:462.80px;width:19px;height:1px;background:#8fb3e6"></div>
<div style="position:absolute;left:229px;top:489.06px;width:19px;height:1px;background:#8fb3e6"></div>
<div style="position:absolute;left:229px;top:515.32px;width:19px;height:1px;background:#8fb3e6"></div>
<div style="position:absolute;left:229px;top:541.58px;width:19px;height:1px;background:#8fb3e6"></div>
<div style="position:absolute;left:229px;top:567.84px;width:19px;height:1px;background:#8fb3e6"></div>
<div style="position:absolute;left:229px;top:594.10px;width:19px;height:1px;background:#8fb3e6"></div>
<div style="position:absolute;left:229px;top:620.36px;width:19px;height:1px;background:#8fb3e6"></div>
<div style="position:absolute;left:229px;top:646.62px;width:19px;height:1px;background:#8fb3e6"></div>
<div style="position:absolute;left:229px;top:672.88px;width:19px;height:1px;background:#8fb3e6"></div>
<div style="position:absolute;left:229px;top:699.14px;width:19px;height:1px;background:#8fb3e6"></div>
<div style="position:absolute;left:229px;top:725.40px;width:19px;height:1px;background:#8fb3e6"></div>
<div style="position:absolute;left:229px;top:751.66px;width:19px;height:1px;background:#8fb3e6"></div>
<div style="position:absolute;left:229px;top:777.92px;width:19px;height:1px;background:#8fb3e6"></div>
<div style="position:absolute;left:1225px;top:174.5px;width:16px;height:617.5px;background:linear-gradient(90deg,#b9c8d8 0px,#c6d5e4 2px,#cbd9e7 8px,#d0dde9 16px)"></div>
<div style="position:absolute;left:1241px;top:149px;width:2px;height:643px;background:linear-gradient(rgba(134,168,214,0) 0px,rgba(134,168,214,.6) 150px,#86a8d6 400px)"></div>
<svg width="10" height="8" viewBox="0 0 10 8" style="position:absolute;left:1228.5px;top:181.5px"><path d="M0.5 7.5 L9.5 7.5 L5 0.5 Z" fill="#2d4b8f"/></svg>
<svg width="10" height="8" viewBox="0 0 10 8" style="position:absolute;left:1228.5px;top:779.5px"><path d="M0.5 0.5 L9.5 0.5 L5 7.5 Z" fill="#2d4b8f"/></svg>
<div style="position:absolute;left:1226px;top:650px;width:14px;height:123px;border:1px solid #28478a;border-radius:7px;box-shadow:inset 0 0 0 1px rgba(40,71,138,.35);background:linear-gradient(90deg,#c8dcf7,#a8c2ea 50%,#7e9fd4)"></div>
</body></html>
